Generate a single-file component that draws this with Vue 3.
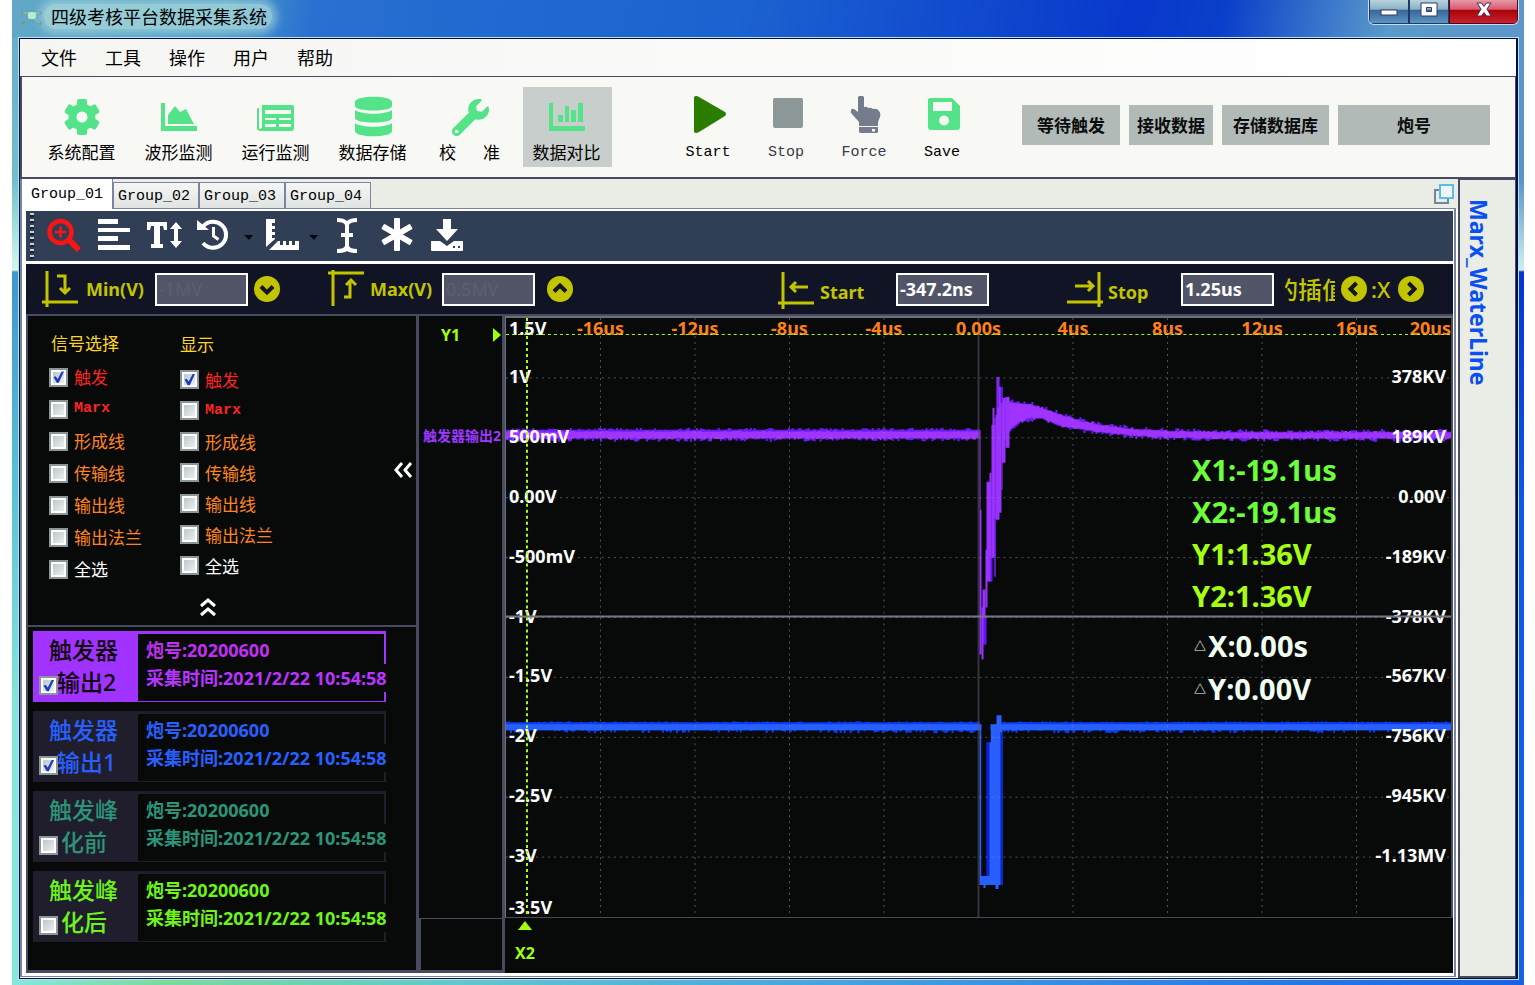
<script setup>
import { ref } from 'vue'

const menus = ['文件', '工具', '操作', '用户', '帮助']
const modules = [
  { label: '系统配置', icon: 'gear' },
  { label: '波形监测', icon: 'area' },
  { label: '运行监测', icon: 'news' },
  { label: '数据存储', icon: 'db' },
  { label: '校 准', icon: 'wrench', wide: true },
  { label: '数据对比', icon: 'bars', active: true },
]
const actions = [
  { label: 'Start', icon: 'play' },
  { label: 'Stop', icon: 'stop', dim: true },
  { label: 'Force', icon: 'hand', dim: true },
  { label: 'Save', icon: 'save' },
]
const chips = [
  { label: '等待触发', cls: 'chip-a' },
  { label: '接收数据', cls: 'chip-b' },
  { label: '存储数据库', cls: 'chip-c' },
  { label: '炮号', cls: 'chip-d' },
]
const tabs = ['Group_01', 'Group_02', 'Group_03', 'Group_04']
const gearTeeth = [0, 60, 120, 180, 240, 300]
const spokes = [0, 60, 120]

const signalNames = [
  ['触发', 'red'], ['Marx', 'red mono'], ['形成线', 'orange'], ['传输线', 'orange'],
  ['输出线', 'orange'], ['输出法兰', 'orange'], ['全选', 'plain'],
]
const makeItems = () => signalNames.map(([name, cls], i) => ({ name, cls, on: i === 0 }))
const groups = ref([
  { title: '信号选择', cls: 'pick', items: makeItems() },
  { title: '显示', cls: 'show', items: makeItems() },
])

const channels = ref([
  { a: '触发器', b: '输出2', cls: 'violet', on: true },
  { a: '触发器', b: '输出1', cls: 'blue', on: true },
  { a: '触发峰', b: '化前', cls: 'teal', on: false },
  { a: '触发峰', b: '化后', cls: 'lime', on: false },
])

const minV = ref('-1MV')
const maxV = ref('0.5MV')
const startT = ref('-347.2ns')
const stopT = ref('1.25us')

/* plot geometry, in viewBox units */
const W = 946
const H = 600
const xTicks = ['-16us', '-12us', '-8us', '-4us', '0.00s', '4us', '8us', '12us', '16us']
  .map((t, i) => ({ t, x: (i + 1) * 94.6 }))
const left = ['1.5V', '1V', '500mV', '0.00V', '-500mV', '-1V', '-1.5V', '-2V', '-2.5V', '-3V', '-3.5V']
const right = ['', '378KV', '189KV', '0.00V', '-189KV', '-378KV', '-567KV', '-756KV', '-945KV', '-1.13MV', '']
const yPos = i => (i === 0 ? 11 : i === 10 ? 591 : i * 60 - 1)
const pct = (v, total) => (v / total) * 100 + '%'

let seed = 7
const rnd = () => {
  seed = (seed * 16807) % 2147483647
  return seed / 2147483647
}
const band = (pts, step, noiseTop, noiseBottom) => {
  const top = []
  const bottom = []
  for (let k = 0; k < pts.length - 1; k++) {
    const [x0, t0, b0] = pts[k]
    const [x1, t1, b1] = pts[k + 1]
    for (let x = x0; x < x1; x += step) {
      const f = (x - x0) / (x1 - x0)
      const t = t0 + (t1 - t0) * f - (rnd() > 0.5 ? rnd() * noiseTop : 0)
      const b = b0 + (b1 - b0) * f + (rnd() > 0.5 ? rnd() * noiseBottom : 0)
      top.push(`${x} ${t.toFixed(1)}`, `${x + step} ${t.toFixed(1)}`)
      bottom.push(`${x} ${b.toFixed(1)}`, `${x + step} ${b.toFixed(1)}`)
    }
  }
  return 'M' + top.join('L') + 'L' + bottom.reverse().join('L') + 'Z'
}
const tail = [
  [500, 82, 118], [504, 84, 112], [512, 85, 104], [524, 86, 101], [536, 90, 101],
  [556, 97, 109], [576, 103, 112], [596, 107, 115], [626, 111, 118], [664, 113, 120],
  [720, 114, 121], [946, 114, 121],
]
const violetEdge = band([[0, 112, 121], [474, 112, 121]], 2, 2, 3) + band(tail, 2, 3, 3)
const violetCore = band([[0, 114, 120], [474, 114, 120]], 2, 1, 2) + band(tail.map(([x, t, b]) => [x, t + 1, b - 1]), 2, 2, 2)
/* ringing burst after the trigger: x, width, top, bottom */
const burst = [
  [474, 1, 112, 192], [474, 2, 192, 337], [476, 2, 290, 342], [477, 3, 272, 327], [480, 2, 232, 290],
  [481, 5, 164, 264], [484, 2, 155, 262], [486, 4, 107, 240], [487, 2, 90, 232], [489, 1, 100, 259],
  [490, 2, 97, 202], [491, 3, 59, 202], [493, 3, 69, 195], [496, 1, 69, 172], [496, 4, 80, 145], [500, 4, 79, 130],
]
const burstEdge = [[478, 3, 300, 327], [485, 2, 240, 264], [489, 1, 200, 259], [492, 1, 59, 90], [495, 2, 69, 85]]
const blueEdge = band([[0, 405, 413], [474, 405, 413]], 2, 1, 3) + band([[496, 405, 413], [946, 405, 413]], 2, 1, 3)
</script>

<template>
  <div class="window">
    <header class="titlebar">
      <svg class="app-logo" viewBox="0 0 24 20" aria-hidden="true">
        <circle cx="3" cy="5" r="2" fill="#7a9a80" /><circle cx="3" cy="15" r="2" fill="#7a9a80" />
        <rect x="8" y="4" width="8" height="7" rx="2" fill="#b8f0c0" />
        <circle cx="20" cy="5" r="2" fill="#5b8a80" /><circle cx="20" cy="15" r="2" fill="#5b8a80" />
        <path d="M3 5h5M16 5h4M14 11l6 4" stroke="#8fc7c4" fill="none" />
      </svg>
      <h1>四级考核平台数据采集系统</h1>
      <div class="win-buttons">
        <button type="button" aria-label="最小化">
          <svg viewBox="0 0 24 20"><rect x="4" y="8" width="16" height="5" fill="#fff" stroke="#303a68" /></svg>
        </button>
        <button type="button" aria-label="最大化">
          <svg viewBox="0 0 24 20"><path d="M4 1h16v13H4zM9.500 5.500v4h5v-4z" fill="#fff" fill-rule="evenodd" stroke="#303a68" /></svg>
        </button>
        <button type="button" class="close" aria-label="关闭">
          <svg viewBox="0 0 24 20"><path d="M5 1h4.500L12 4.500 14.500 1H19l-4 6 4 7h-4.500L12 10.500 9.500 14H5l4-7z" fill="#fff" stroke="#4a2a50" /></svg>
        </button>
      </div>
    </header>

    <div class="client">
      <nav class="menubar">
        <button v-for="m in menus" :key="m" type="button">{{ m }}</button>
      </nav>

      <div class="ribbon">
        <div class="modules">
          <button v-for="m in modules" :key="m.icon" type="button" class="tool" :class="{ active: m.active, spaced: m.wide }">
            <svg viewBox="0 0 42 42" aria-hidden="true">
              <g v-if="m.icon === 'gear'">
                <rect v-for="a in gearTeeth" :key="a" x="16" y="3" width="10" height="10" rx="2" :transform="`rotate(${a} 21 21)`" />
                <circle cx="21" cy="21" r="9.500" fill="none" stroke="#54e388" stroke-width="8" />
              </g>
              <path v-else-if="m.icon === 'area'" d="M3 7h4v23h32v5H3zM10 28V19l7-9 5 6 6-3 8 15z" />
              <g v-else-if="m.icon === 'news'">
                <path fill-rule="evenodd" d="M7 9h30q2 0 2 2v21q0 3-3 3H6q-4 0-4-3V13q0-1 2-1v19q0 2 1 2t2-2zM10 14v4h26v-4zM10 22v2h11v-2zM24 22v2h12v-2zM10 28v3h11v-3zM24 28v3h12v-3z" />
              </g>
              <g v-else-if="m.icon === 'db'">
                <path d="M3 6c0-7 37-7 37 0v4c0 6-37 6-37 0zM3 14c7 5 30 5 37 0v8c0 6-37 6-37 0zM3 27c7 5 30 5 37 0v8c0 7-37 7-37 0z" />
              </g>
              <svg v-else-if="m.icon === 'wrench'" x="3" y="3" width="37" height="37" viewBox="0 0 512 512">
                <path d="M507.730 109.100c-2.240-9.030-13.540-12.090-20.120-5.510l-74.360 74.360-67.880-11.310-11.310-67.880 74.360-74.360c6.620-6.620 3.430-17.900-5.660-20.160-47.380-11.740-99.550.910-136.580 37.930-39.640 39.640-50.550 97.100-34.050 147.200L18.740 402.760c-24.990 24.990-24.990 65.510 0 90.500 24.990 24.990 65.510 24.990 90.500 0l213.210-213.210c50.120 16.710 107.470 5.680 147.370-34.220 37.070-37.070 49.700-89.320 37.910-136.730zM64 472c-13.250 0-24-10.750-24-24 0-13.260 10.750-24 24-24s24 10.740 24 24c0 13.250-10.750 24-24 24z" />
              </svg>
              <path v-else d="M3 7h4v23h32v5H3zM12 19h5v7h-5zM19 10h4v16h-4zM25 14h5v12h-5zM32 7h5v19h-5z" />
            </svg>
            <span>{{ m.label }}</span>
          </button>
        </div>

        <div class="actions">
          <button v-for="a in actions" :key="a.label" type="button" class="tool act" :class="{ dim: a.dim }">
            <svg viewBox="0 0 42 42" aria-hidden="true">
              <path v-if="a.icon === 'play'" fill="#2b7d00" d="M7 1q2-2 5 0l26 15q2 2 0 4L12 36q-3 2-5 0z" />
              <rect v-else-if="a.icon === 'stop'" x="8" y="2" width="30" height="30" rx="2" fill="#8d9899" />
              <path v-else-if="a.icon === 'hand'" fill="#757d8c" fill-rule="evenodd" d="M15 1q3-3 6 0v10q3-1 4 1 3-1 5 1 4-1 6 2 2 2 1 6l-2 5v4H16v-4l-8-9q-1-5 3-4l4 3zM16 31h19v5q0 1-2 1H18q-2 0-2-1zM29 33v2.500h3V33z" />
              <path v-else fill="#54e388" fill-rule="evenodd" d="M9 2h22l8 8v21q0 3-3 3H10q-3 0-3-3V4q0-2 2-2zM12 6v9h19V6zM23 19.500a5 5 0 1 0 .1 0z" />
            </svg>
            <span>{{ a.label }}</span>
          </button>
        </div>

        <div class="chips">
          <button v-for="c in chips" :key="c.label" type="button" :class="c.cls">{{ c.label }}</button>
        </div>
      </div>

      <div class="body">
        <section class="workspace">
          <div class="tabstrip">
            <button v-for="(t, i) in tabs" :key="t" type="button" :class="{ current: i === 0 }">{{ t }}</button>
            <svg class="restore" viewBox="0 0 22 22" aria-hidden="true">
              <path d="M8 7H2v13h13v-5" fill="none" stroke="#7885a0" stroke-width="2" />
              <rect x="7" y="2" width="13" height="13" fill="#eef6f6" stroke="#5cbfe8" stroke-width="2" />
            </svg>
          </div>

          <div class="page">
            <div class="iconbar">
              <i class="grip"></i>
              <button type="button" aria-label="放大">
                <svg viewBox="0 0 36 36" fill="none" stroke="#fb1414">
                  <circle cx="14.500" cy="14" r="11" stroke-width="4.500" />
                  <path d="M23 22l10 10" stroke-width="6" /><path d="M14.500 8.500v11M9 14h11" stroke-width="2.500" />
                </svg>
              </button>
              <button type="button" aria-label="左对齐">
                <svg viewBox="0 0 36 36"><path d="M2 1h20v5H2zM2 10h32v4H2zM2 18h20v5H2zM2 27h32v5H2z" /></svg>
              </button>
              <button type="button" aria-label="文字高度">
                <svg viewBox="0 0 36 36"><path d="M1 4h20v8h-3l-1-4h-3v18h3v4H5v-4h3V8H5l-1 4H1zM30 4l6 7h-4v12h4l-6 7-6-7h4V11h-4z" /></svg>
              </button>
              <button type="button" class="has-menu" aria-label="历史">
                <svg viewBox="0 0 36 36"><path d="M7 8.500A13 13 0 1 1 7 25" fill="none" stroke="#fff" stroke-width="4" /><path d="M1 2l12 10H1z" /><path d="M17.500 9v9l5 3.500" fill="none" stroke="#fff" stroke-width="3" /></svg>
              </button>
              <button type="button" class="caret" aria-label="历史菜单"><svg viewBox="0 0 16 36"><path d="M4 17h9l-4 5z" fill="#05080c" /></svg></button>
              <button type="button" class="has-menu" aria-label="标尺">
                <svg viewBox="0 0 36 36"><path d="M2 1h9v4H8v3h3v3H8v3h3v3H8v3h3v1L2 29zM5 32l9-9h2v4h3v-4h3v4h3v-4h3v4h3v-4h4v9z" /></svg>
              </button>
              <button type="button" class="caret" aria-label="标尺菜单"><svg viewBox="0 0 16 36"><path d="M1 17h9l-4 5z" fill="#05080c" /></svg></button>
              <button type="button" aria-label="光标">
                <svg viewBox="0 0 36 36"><path d="M8 0q7 0 10 3 3-3 10-3v4q-7 0-8 3v8h4v4h-4v9q1 3 8 3v4q-7 0-10-2-3 2-10 2v-4q7 0 8-3v-9h-4v-4h4V7q-1-3-8-3z" /></svg>
              </button>
              <button type="button" aria-label="标记">
                <svg viewBox="0 0 36 36"><rect v-for="s in spokes" :key="s" x="15" y="0" width="6" height="33" rx="1" :transform="`rotate(${s} 18 16.500)`" /></svg>
              </button>
              <button type="button" aria-label="下载">
                <svg viewBox="0 0 36 36"><path fill-rule="evenodd" d="M14 1h8v10h7L18 23 7 11h7zM2 23h9l7 5 7-5h9v9q0 1-1 1H3q-1 0-1-1zM24 28v2h2v-2zM29 28v2h2v-2z" /></svg>
              </button>
            </div>

            <div class="params">
              <svg class="edge" viewBox="0 0 36 40"><path d="M5 2v36M0 33h36M15 7h8v16M18 19l5 5 5-5" /></svg>
              <label for="minv" class="l-min">Min(V)</label>
              <input id="minv" v-model="minV" class="off" />
              <button type="button" class="round" aria-label="减小"><svg viewBox="0 0 26 26"><circle cx="13" cy="13" r="13" /><path d="M7 10.500l6 6 6-6" /></svg></button>
              <svg class="edge second" viewBox="0 0 36 40"><path d="M5 1v36M0 4h36M16 28h6V11M18 16l5-5 5 5" /></svg>
              <label for="maxv" class="l-max">Max(V)</label>
              <input id="maxv" v-model="maxV" class="off" />
              <button type="button" class="round apart" aria-label="增大"><svg viewBox="0 0 26 26"><circle cx="13" cy="13" r="13" /><path d="M7 15.500l6-6 6 6" /></svg></button>
              <span class="fill"></span>
              <svg class="edge" viewBox="0 0 36 40"><path d="M5 3v37M0 34h36M13 18h17M18 13l-5 5 5 5" /></svg>
              <label for="startt" class="l-start">Start</label>
              <input id="startt" v-model="startT" />
              <svg class="edge third" viewBox="0 0 36 40"><path d="M32 3v35M0 33h36M8 17h17M21 12l5 5-5 5" /></svg>
              <label for="stopt" class="l-stop">Stop</label>
              <input id="stopt" v-model="stopT" />
              <span class="interp"><span>的插值</span></span>
              <button type="button" class="round" aria-label="上一个"><svg viewBox="0 0 26 26"><circle cx="13" cy="13" r="13" /><path d="M15.500 7l-6 6 6 6" /></svg></button>
              <span class="times">:X</span>
              <button type="button" class="round" aria-label="下一个"><svg viewBox="0 0 26 26"><circle cx="13" cy="13" r="13" /><path d="M10.500 7l6 6-6 6" /></svg></button>
            </div>

            <div class="main">
              <aside class="side">
                <div class="signals">
                  <fieldset v-for="g in groups" :key="g.title" :class="g.cls">
                    <legend>{{ g.title }}</legend>
                    <label v-for="it in g.items" :key="it.name" :class="it.cls">
                      <input v-model="it.on" type="checkbox" /><span>{{ it.name }}</span>
                    </label>
                  </fieldset>
                  <button type="button" class="fold-left" aria-label="收起侧栏"><svg viewBox="0 0 20 16"><path d="M9 1L3 8l6 7M18 1l-6 7 6 7" /></svg></button>
                  <button type="button" class="fold-up" aria-label="收起列表"><svg viewBox="0 0 16 20"><path d="M1 9l7-6 7 6M1 18l7-6 7 6" /></svg></button>
                </div>
                <div class="channels">
                  <article v-for="(c, i) in channels" :key="i" :class="c.cls">
                    <label class="name">
                      <span>{{ c.a }}</span><span :class="{ short: c.b.length === 2 }">{{ c.b }}</span>
                      <input v-model="c.on" type="checkbox" />
                    </label>
                    <div class="info">
                      <p>炮号:20200600</p>
                      <p class="time">采集时间:2021/2/22 10:54:58</p>
                    </div>
                  </article>
                </div>
              </aside>

              <div class="gutter">
                <div class="rail">
                  <span class="y1">Y1</span><i class="arrow-right"></i>
                  <span class="trace-name">触发器输出2</span>
                </div>
                <div class="corner"></div>
              </div>

              <div class="scope">
                <div class="plot">
                  <svg class="layer" :viewBox="`0 0 ${W} ${H}`" preserveAspectRatio="none">
                    <path :d="violetEdge" fill="#6a1cf5" />
                    <path :d="violetCore" fill="#a033ff" />
                    <rect v-for="(b, i) in burst" :key="'b' + i" :x="b[0]" :y="b[2]" :width="b[1]" :height="b[3] - b[2]" fill="#9a32ff" />
                    <rect v-for="(b, i) in burstEdge" :key="'e' + i" :x="b[0]" :y="b[2]" :width="b[1]" :height="b[3] - b[2]" fill="#6414f8" />
                    <path :d="blueEdge" fill="#0a3cf2" />
                    <path d="M0 407H476V559H481V425H485V407H491V398H496V407H946V413H497V568H474V413H0Z" fill="#285fff" />
                    <path d="M476 413h9v12h-4v134h-5z" fill="#080a0a" />
                    <path d="M481 425h3v134h-3zM495 415h2v153h-2z" fill="#0a22d8" />
                    <path d="M478 568h2v3h-2zM490 568h3v4h-3z" fill="#285fff" />
                    <g class="grid">
                      <line v-for="t in xTicks" :key="t.t" :x1="t.x" :x2="t.x" y1="0" :y2="H" :class="{ zero: t.t === '0.00s' }" />
                      <line v-for="n in 9" :key="n" x1="0" :x2="W" :y1="n * 60" :y2="n * 60" />
                    </g>
                  </svg>
                  <span v-for="t in xTicks" :key="t.t" class="xt" :style="{ left: pct(t.x, W) }">{{ t.t }}</span>
                  <span class="xt last">20us</span>
                  <span v-for="(t, i) in left" :key="'l' + i" class="yt" :style="{ top: pct(yPos(i), H) }">{{ t }}</span>
                  <span v-for="(t, i) in right" :key="'r' + i" class="yt r" :style="{ top: pct(yPos(i), H) }">{{ t }}</span>
                  <dl class="readout">
                    <div class="cx"><dt>X1:</dt><dd>-19.1us</dd></div>
                    <div class="cx"><dt>X2:</dt><dd>-19.1us</dd></div>
                    <div class="cy"><dt>Y1:</dt><dd>1.36V</dd></div>
                    <div class="cy"><dt>Y2:</dt><dd>1.36V</dd></div>
                    <div class="delta first"><dt><small>△</small>X:</dt><dd>0.00s</dd></div>
                    <div class="delta"><dt><small>△</small>Y:</dt><dd>0.00V</dd></div>
                  </dl>
                  <svg class="layer" :viewBox="`0 0 ${W} ${H}`" preserveAspectRatio="none">
                    <line x1="0" :x2="W" y1="299" y2="299" stroke="#757783" stroke-width="2" />
                    <line x1="21" x2="21" y1="0" :y2="H" stroke="#a8ff10" stroke-width="2" stroke-dasharray="3 3" />
                    <line x1="0" :x2="W" y1="16.500" y2="16.500" stroke="#a8ff10" stroke-dasharray="3 3" />
                  </svg>
                </div>
                <div class="foot">
                  <i class="arrow-up"></i>
                  <span>X2</span>
                </div>
              </div>
            </div>
          </div>
        </section>

        <aside class="dock"><button type="button">Marx_WaterLine</button></aside>
      </div>
    </div>
  </div>
</template>

<style>
body {
  background: #fff;
}
</style>

<style scoped>
* {
  box-sizing: border-box;
}
.window {
  --ui: "Noto Sans", "Noto Sans CJK SC", sans-serif;
  --cjk: "Noto Sans CJK SC", sans-serif;
  --mono: "Liberation Mono", "Noto Sans CJK SC", monospace;
  --line: #484a60;
  display: flex;
  flex-direction: column;
  height: 100vh;
  min-width: 1300px;
  margin: 0 11px 0 12px;
  padding: 0 5px 4px;
  font-family: var(--ui);
  font-size: 18px;
  background:
    linear-gradient(100deg, #62a8c8 0, #4b9bc9 14%, #2a70d0 20%, #226ad0 30%, #1c62d0 48%, #0838cc 74%, #0a3fca 80%, #5a9acb 91%, #5e96c8) 0 0 / 100% 38px no-repeat,
    linear-gradient(#6aaec8 38px, #6fc0cc 180px, #d4f8ec 270px, #3a98ce 272px, #5cc4d2 500px, #80e6d8 700px, #86e8dc) 0 0 / 8px 100% no-repeat,
    linear-gradient(#5e96c8 38px, #5a94c8 180px, #d0eef0 270px, #0636c8 272px, #1058e0 500px, #1a62e4) 100% 0 / 8px 100% no-repeat,
    linear-gradient(90deg, #86e8dc, #7adc98 10%, #60c8cc 30%, #3f9be0 60%, #1a62e4) 0 100% / 100% 8px no-repeat;
}
button {
  margin: 0;
  padding: 0;
  border: 0;
  background: none;
  color: inherit;
  font: inherit;
}
svg {
  display: block;
}
.titlebar {
  display: flex;
  align-items: flex-start;
  height: 37px;
  flex: none;
}
.app-logo {
  width: 24px;
  height: 20px;
  margin: 8px 0 0 3px;
}
h1 {
  margin: 4px 0 0;
  padding: 0 5px 0 7px;
  font: 400 18px/25px var(--cjk);
  color: #000;
  background: rgba(176, 222, 220, 0.7);
  border-radius: 12px;
  box-shadow: 0 0 8px 5px rgba(176, 222, 220, 0.6);
}
.win-buttons {
  display: flex;
  margin-left: auto;
  border: 1px solid #c4e2ee;
  border-top: 0;
  border-radius: 0 0 6px 6px;
  overflow: hidden;
}
.win-buttons button {
  display: flex;
  justify-content: center;
  align-items: flex-start;
  padding-top: 2px;
  width: 40px;
  height: 24px;
  border: 1px solid #203864;
  border-top: 0;
  background: linear-gradient(#b8d4dc 0, #88b0c8 40%, #386898 45%, #5c94c4);
}
.win-buttons .close {
  width: 69px;
  border-color: #500818;
  background: linear-gradient(#e898a8 0, #d85870 40%, #a80404 45%, #c82030);
}
.win-buttons svg {
  flex: none;
  width: 24px;
  height: 20px;
}
.client {
  flex: 1;
  min-height: 0;
  display: flex;
  flex-direction: column;
  border: 1px solid #000c48;
  border-right-width: 2px;
  outline: 1px solid #b4e4ec;
  margin: 1px 1px 2px 2px;
  background: #fff;
}
.menubar {
  display: flex;
  gap: 28px;
  height: 37px;
  flex: none;
  padding-left: 21px;
  font: 400 18px/37px var(--cjk);
  background: linear-gradient(90deg, #f5f5f2, #fff);
}
.ribbon {
  display: flex;
  align-items: center;
  height: 103px;
  flex: none;
  padding: 0 25px 0 16px;
  background: #f8f8f5;
  border: solid var(--line);
  border-width: 1px 1px 2px 2px;
}
.modules {
  display: flex;
  gap: 8px;
}
.tool {
  display: flex;
  flex-direction: column;
  align-items: center;
  width: 89px;
  height: 80px;
  padding: 9px 2px 0 0;
  font: 400 17px/24px var(--cjk);
  color: #000;
  fill: #54e388;
}
.tool > svg {
  width: 42px;
  height: 42px;
  margin-bottom: 2px;
}
.tool.active {
  background: #c8cecb;
}
.spaced span {
  word-spacing: 23px;
}
.actions {
  display: flex;
  margin-left: 58px;
}
.tool.act {
  width: 78px;
  font: 400 15px/26px var(--mono);
}
.dim {
  color: #3a3c48;
}
.chips {
  display: flex;
  gap: 9px;
  margin: 0 0 4px auto;
}
.chips button {
  height: 40px;
  font: 700 17px/40px var(--cjk);
  background: #b2bab8;
  color: #0a0c0c;
}
.chip-a { width: 98px; }
.chip-b { width: 84px; }
.chip-c { width: 107px; }
.chip-d { width: 152px; }

.body {
  flex: 1;
  min-height: 0;
  display: flex;
}
.workspace {
  flex: 1;
  min-width: 0;
  display: flex;
  flex-direction: column;
  padding-right: 2px;
  background: linear-gradient(#eaece6 30px, #fff 30px);
}
.tabstrip {
  display: flex;
  align-items: flex-end;
  height: 29px;
  flex: none;
}
.tabstrip button {
  height: 26px;
  width: 87px;
  border: 1px solid #7885a0;
  border-left-width: 2px;
  border-bottom: 0;
  margin-right: -1px;
  font: 400 15px/28px var(--mono);
  text-align: left;
  padding-left: 4px;
  white-space: nowrap;
  color: #000;
  background: linear-gradient(#f6f7f5, #dfe3e2);
}
.tabstrip .current {
  position: relative;
  z-index: 1;
  width: 93px;
  height: 30px;
  margin-bottom: -1px;
  line-height: 27px;
  padding-left: 9px;
  background: #fff;
  border-top: 0;
}
.restore {
  width: 22px;
  height: 22px;
  margin: 0 1px 3px auto;
}
.page {
  flex: 1;
  min-height: 0;
  display: flex;
  flex-direction: column;
  padding: 2px 1px 3px 4px;
  margin-bottom: 1px;
  border: 1px solid #7885a0;
  border-width: 1px 2px 1px 2px;
  background: #fff;
}
.iconbar {
  display: flex;
  align-items: center;
  height: 50px;
  flex: none;
  padding-left: 4px;
  margin-bottom: 3px;
  background: #303f55;
  fill: #fff;
}
.grip {
  width: 4px;
  height: 46px;
  margin-right: 12px;
  background: repeating-linear-gradient(#c9cfd6 0 2px, #18222f 2px 4px, transparent 4px 6px);
}
.iconbar button {
  width: 36px;
  height: 36px;
  margin-right: 14px;
}
.iconbar .has-menu {
  margin-right: 8px;
}
.iconbar .caret {
  width: 16px;
  margin-right: 8px;
}
.iconbar .has-menu + .caret + button:not(.has-menu) {
  margin-left: -3px;
}
.iconbar svg {
  width: 100%;
  height: 100%;
}
.params {
  display: flex;
  align-items: center;
  height: 50px;
  flex: none;
  padding: 0 29px 0 16px;
  color: #c3c400;
  background: #101424;
  font-weight: 700;
  white-space: nowrap;
}
.edge {
  flex: none;
  width: 36px;
  height: 40px;
  fill: none;
  stroke: #c3c400;
  stroke-width: 3;
}
.second { margin-left: 48px; }
.third { margin-left: 78px; }
.l-min { width: 77px; padding-left: 8px; }
.l-max { width: 78px; padding-left: 6px; }
.l-start { width: 82px; padding: 5px 0 0 6px; }
.l-stop { width: 78px; padding: 5px 0 0 5px; }
.params input {
  width: 93px;
  height: 33px;
  flex: none;
  padding: 0 2px;
  border: 2px solid #fff;
  border-radius: 0;
  outline: 0;
  background: #525468;
  color: #fff;
  font: 700 18px var(--ui);
}
.params .off {
  color: #5d5f70;
  font-weight: 400;
}
.round {
  flex: none;
  width: 26px;
  height: 26px;
  margin-left: 6px;
}
.round.apart {
  margin-left: 12px;
}
.round svg {
  fill: #c3c400;
}
.round path {
  fill: none;
  stroke: #101424;
  stroke-width: 4;
}
.fill {
  flex: 1;
}
.interp {
  display: flex;
  justify-content: center;
  width: 50px;
  margin-left: 11px;
  overflow: hidden;
  font: 500 24px/32px var(--cjk);
}
.interp span {
  flex: none;
}
.times {
  width: 25px;
  padding-left: 4px;
  font-size: 22px;
  font-weight: 500;
}

.main {
  flex: 1;
  min-height: 0;
  display: flex;
  border-top: 2px solid var(--line);
  background: #080a0a;
}
.side {
  width: 393px;
  flex: none;
  display: flex;
  flex-direction: column;
  border: solid var(--line);
  border-width: 0 3px 3px 2px;
}
.signals {
  position: relative;
  display: flex;
  height: 309px;
  flex: none;
}
fieldset {
  display: flex;
  flex-direction: column;
  min-width: 0;
  margin: 0;
  border: 0;
  padding: 0;
  font: 400 17px/32px var(--cjk);
  white-space: nowrap;
}
legend {
  padding: 0 0 2px 2px;
  color: #ffd428;
}
.pick { margin: 11px 0 0 21px; width: 131px; }
.show { margin: 12px 0 0; }
.show legend { padding: 0 0 4px; }
fieldset label {
  display: flex;
  align-items: center;
  gap: 6px;
  height: 32px;
}
.show label { height: 31px; }
.red { color: #ff2424; }
.orange { color: #ff8420; }
.plain { color: #fff; }
.mono { font: 700 15px/24px var(--mono); }
input[type="checkbox"] {
  appearance: none;
  position: relative;
  flex: none;
  width: 19px;
  height: 19px;
  margin: 0;
  border: 2px solid #8a9698;
  background: linear-gradient(135deg, #b4c0c4, #f4f6f6);
  box-shadow: inset 0 0 0 2px #fff;
}
input[type="checkbox"]:checked::after {
  content: "";
  position: absolute;
  inset: 1px;
  background: #1c3cc0;
  clip-path: polygon(12% 50%, 28% 44%, 44% 66%, 74% 8%, 92% 8%, 52% 94%, 36% 94%);
}
.fold-left {
  position: absolute;
  right: 3px;
  top: 146px;
  width: 20px;
}
.fold-up {
  position: absolute;
  left: 172px;
  bottom: 8px;
  width: 16px;
}
.signals button path {
  fill: none;
  stroke: #fff;
  stroke-width: 3;
}
.channels {
  flex: 1;
  display: flex;
  flex-direction: column;
  gap: 9px;
  padding: 4px 0 0 5px;
  border-top: 2px solid var(--line);
}
article {
  display: flex;
  width: 353px;
  height: 71px;
  flex: none;
  background: #201e2c;
}
.name {
  position: relative;
  flex: none;
  width: 105px;
  padding: 3px 0 0 16px;
  font: 500 23px/32px var(--ui);
}
.name span {
  display: block;
}
.name span + span {
  padding-left: 8px;
}
.name .short {
  padding-left: 12px;
}
.name input {
  position: absolute;
  left: 6px;
  bottom: 7px;
}
.info {
  flex: 1;
  min-width: 0;
  margin: 3px 2px 1px 0;
  padding: 2px 0 0 8px;
  background: #080a0a;
  white-space: nowrap;
  font-weight: 700;
}
.info p {
  margin: 0;
  line-height: 28px;
}
.info .time {
  margin-right: -2px;
  background: #080a0a;
}
.violet { background: #a033ff; color: #a033ff; }
.violet .info .time { color: #b834ff; }
.violet .name { color: #10040c; }
.violet .info p:first-child { color: #c030f0; }
.blue { color: #2860ff; }
.teal { color: #2c9478; }
.lime { color: #6cf41c; }

.gutter {
  width: 86px;
  flex: none;
  display: flex;
  flex-direction: column;
  border-right: 3px solid var(--line);
}
.rail {
  position: relative;
  flex: 1;
}
.y1 {
  position: absolute;
  left: 22px;
  top: 8px;
  line-height: 22px;
  font-size: 16px;
  font-weight: 700;
  color: #a0ff10;
}
.arrow-right {
  position: absolute;
  right: 1px;
  top: 12px;
  border: solid transparent;
  border-width: 7px 0 7px 8px;
  border-left-color: #a0ff10;
}
.trace-name {
  position: absolute;
  left: 4px;
  top: 20%;
  margin-top: -11px;
  line-height: 22px;
  font-size: 14px;
  font-weight: 700;
  white-space: nowrap;
  color: #9c38ff;
}
.corner {
  height: 55px;
  flex: none;
  border: solid var(--line);
  border-width: 1px 0 3px 2px;
}
.scope {
  flex: 1;
  min-width: 0;
  display: flex;
  flex-direction: column;
}
.plot {
  position: relative;
  flex: 1;
  border: solid #484a58;
  border-width: 2px 2px 1px 1px;
  border-top-color: #6c6f7c;
  border-left-color: #6c6f7c;
}
.layer {
  position: absolute;
  inset: 0;
  width: 100%;
  height: 100%;
}
.grid line {
  stroke: #8c8ca8;
  stroke-opacity: 0.55;
  stroke-width: 1;
  stroke-dasharray: 2 4;
}
.grid .zero {
  stroke: #5a5468;
  stroke-width: 2;
  stroke-dasharray: none;
}
.xt,
.yt {
  position: absolute;
  font-weight: 700;
  line-height: 20px;
  white-space: nowrap;
}
.xt {
  top: 0;
  transform: translateX(-50%);
  color: #ff8018;
}
.xt.last {
  right: 0;
  transform: none;
}
.yt {
  left: 3px;
  margin-top: -11px;
  color: #fff;
}
.yt.r {
  left: auto;
  right: 5px;
}
.readout {
  position: absolute;
  top: 22%;
  right: 0;
  width: 259px;
  margin: -1px 0 0;
  font-size: 29px;
  font-weight: 700;
  line-height: 42px;
}
.readout div {
  display: flex;
}
.readout dd {
  margin: 0;
}
.cx { color: #6cff3c; }
.cy { color: #a4ff14; }
.delta { color: #f0fff2; }
.delta.first { margin-top: 8px; }
.delta small {
  display: inline-block;
  width: 16px;
  font-size: 12px;
  font-weight: 700;
  vertical-align: 6px;
  padding-left: 2px;
}
.foot {
  height: 55px;
  flex: none;
  display: flex;
  flex-direction: column;
  align-items: center;
  width: 40px;
  padding-top: 3px;
  font-size: 16px;
  font-weight: 700;
  color: #a0ff10;
}
.arrow-up {
  border: solid transparent;
  border-width: 0 7px 9px;
  border-bottom-color: #a0ff10;
  margin-bottom: 12px;
}
.foot span {
  line-height: 22px;
}
.dock {
  width: 58px;
  flex: none;
  border: solid var(--line);
  border-width: 1px 1px 2px 2px;
  background: #eaece6;
}
.dock button {
  display: block;
  writing-mode: vertical-rl;
  margin: 19px 0 0 4px;
  font: 700 23px/30px var(--ui);
  color: #0a50f0;
}
</style>
